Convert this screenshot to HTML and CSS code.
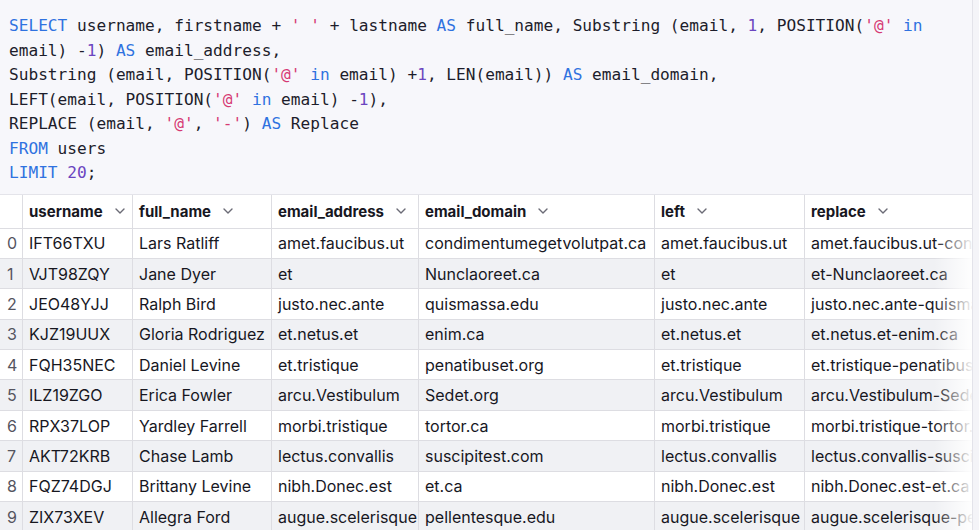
FILE: index.html
```html
<!DOCTYPE html>
<html>
<head>
<meta charset="utf-8">
<link rel="stylesheet" href="styles.css">
</head>
<body>
<div class="frame">
  <div class="main">
    <pre class="code"><span class="kw">SELECT</span> username, firstname + <span class="str">' '</span> + lastname <span class="kw">AS</span> full_name, Substring (email, <span class="num">1</span>, POSITION(<span class="str">'@'</span> <span class="kw">in</span>
email) -<span class="num">1</span>) <span class="kw">AS</span> email_address,
Substring (email, POSITION(<span class="str">'@'</span> <span class="kw">in</span> email) +<span class="num">1</span>, LEN(email)) <span class="kw">AS</span> email_domain,
LEFT(email, POSITION(<span class="str">'@'</span> <span class="kw">in</span> email) -<span class="num">1</span>),
REPLACE (email, <span class="str">'@'</span>, <span class="str">'-'</span>) <span class="kw">AS</span> Replace
<span class="kw">FROM</span> users
<span class="kw">LIMIT</span> <span class="num">20</span>;</pre>
    <div class="grid">
      <div class="row head">
        <div class="c c0"></div>
        <div class="c c1">username<svg class="chev" viewBox="0 0 12 8"><path d="M2 2l4 4 4-4"/></svg></div>
        <div class="c c2">full_name<svg class="chev" viewBox="0 0 12 8"><path d="M2 2l4 4 4-4"/></svg></div>
        <div class="c c3">email_address<svg class="chev" viewBox="0 0 12 8"><path d="M2 2l4 4 4-4"/></svg></div>
        <div class="c c4">email_domain<svg class="chev" viewBox="0 0 12 8"><path d="M2 2l4 4 4-4"/></svg></div>
        <div class="c c5">left<svg class="chev" viewBox="0 0 12 8"><path d="M2 2l4 4 4-4"/></svg></div>
        <div class="c c6">replace<svg class="chev" viewBox="0 0 12 8"><path d="M2 2l4 4 4-4"/></svg></div>
      </div>
      <div class="row"><div class="c c0">0</div><div class="c c1">IFT66TXU</div><div class="c c2">Lars Ratliff</div><div class="c c3">amet.faucibus.ut</div><div class="c c4">condimentumegetvolutpat.ca</div><div class="c c5">amet.faucibus.ut</div><div class="c c6">amet.faucibus.ut-condimentumegetvolutpat.ca</div></div>
      <div class="row alt"><div class="c c0">1</div><div class="c c1">VJT98ZQY</div><div class="c c2">Jane Dyer</div><div class="c c3">et</div><div class="c c4">Nunclaoreet.ca</div><div class="c c5">et</div><div class="c c6">et-Nunclaoreet.ca</div></div>
      <div class="row"><div class="c c0">2</div><div class="c c1">JEO48YJJ</div><div class="c c2">Ralph Bird</div><div class="c c3">justo.nec.ante</div><div class="c c4">quismassa.edu</div><div class="c c5">justo.nec.ante</div><div class="c c6">justo.nec.ante-quismassa.edu</div></div>
      <div class="row alt"><div class="c c0">3</div><div class="c c1">KJZ19UUX</div><div class="c c2">Gloria Rodriguez</div><div class="c c3">et.netus.et</div><div class="c c4">enim.ca</div><div class="c c5">et.netus.et</div><div class="c c6">et.netus.et-enim.ca</div></div>
      <div class="row"><div class="c c0">4</div><div class="c c1">FQH35NEC</div><div class="c c2">Daniel Levine</div><div class="c c3">et.tristique</div><div class="c c4">penatibuset.org</div><div class="c c5">et.tristique</div><div class="c c6">et.tristique-penatibuset.org</div></div>
      <div class="row alt"><div class="c c0">5</div><div class="c c1">ILZ19ZGO</div><div class="c c2">Erica Fowler</div><div class="c c3">arcu.Vestibulum</div><div class="c c4">Sedet.org</div><div class="c c5">arcu.Vestibulum</div><div class="c c6">arcu.Vestibulum-Sedet.org</div></div>
      <div class="row"><div class="c c0">6</div><div class="c c1">RPX37LOP</div><div class="c c2">Yardley Farrell</div><div class="c c3">morbi.tristique</div><div class="c c4">tortor.ca</div><div class="c c5">morbi.tristique</div><div class="c c6">morbi.tristique-tortor.ca</div></div>
      <div class="row alt"><div class="c c0">7</div><div class="c c1">AKT72KRB</div><div class="c c2">Chase Lamb</div><div class="c c3">lectus.convallis</div><div class="c c4">suscipitest.com</div><div class="c c5">lectus.convallis</div><div class="c c6">lectus.convallis-suscipitest.com</div></div>
      <div class="row"><div class="c c0">8</div><div class="c c1">FQZ74DGJ</div><div class="c c2">Brittany Levine</div><div class="c c3">nibh.Donec.est</div><div class="c c4">et.ca</div><div class="c c5">nibh.Donec.est</div><div class="c c6">nibh.Donec.est-et.ca</div></div>
      <div class="row alt"><div class="c c0">9</div><div class="c c1">ZIX73XEV</div><div class="c c2">Allegra Ford</div><div class="c c3">augue.scelerisque</div><div class="c c4">pellentesque.edu</div><div class="c c5">augue.scelerisque</div><div class="c c6">augue.scelerisque-pellentesque.edu</div></div>
      <div class="fade"></div>
    </div>
  </div>
  <div class="rail"></div>
</div>
</body>
</html>
```
FILE: styles.css
```css
* { box-sizing: border-box; }
html, body { margin: 0; padding: 0; background: #fff; }
body { width: 979px; height: 530px; overflow: hidden; }
.frame { display: flex; height: 530px; }
.main { flex: none; width: 973px; min-width: 0; border-right: 1px solid #e3e3ea; overflow: hidden; display: flex; flex-direction: column; }
.rail { flex: 1; background: #f4f4f8; }
.code {
  flex: none;
  margin: 0;
  background: #f7f7fb;
  border-bottom: 1px solid #e4e4ea;
  height: 195px;
  padding: 14px 9px 0;
  font-family: "DejaVu Sans Mono", "Liberation Mono", monospace;
  font-size: 16.15px;
  line-height: 24.5px;
  color: #1d1d2b;
  white-space: pre;
}
.kw { color: #2f72e0; }
.str { color: #d63a73; }
.num { color: #6b45c0; }
.grid { flex: none; position: relative; font-family: "Inter", "Noto Sans", sans-serif; font-size: 16px; color: #17171f; }
.row { display: flex; height: 30.4px; border-bottom: 1px solid #dddde2; background: #fff; }
.row.alt { background: #f0f1f4; }
.row.head { height: 33.5px; font-weight: 700; font-size: 15px; }
.c { flex: none; display: flex; align-items: center; padding-left: 6px; border-right: 1px solid #dddde2; white-space: nowrap; overflow: hidden; }
.c0 { width: 23px; padding-left: 7px; color: #55555f; }
.c1 { width: 110px; }
.c2 { width: 139px; }
.c3 { width: 147px; }
.c4 { width: 236px; }
.c5 { width: 150px; }
.c6 { width: 168px; border-right: none; }
.chev { width: 12px; height: 8px; margin-left: 11px; fill: none; stroke: #6b6b76; stroke-width: 1.4; stroke-linecap: round; stroke-linejoin: round; }
.fade { position: absolute; top: 34px; right: 0; bottom: 0; width: 38px; background: linear-gradient(to right, rgba(255,255,255,0), rgba(255,255,255,0.95)); pointer-events: none; }
```
